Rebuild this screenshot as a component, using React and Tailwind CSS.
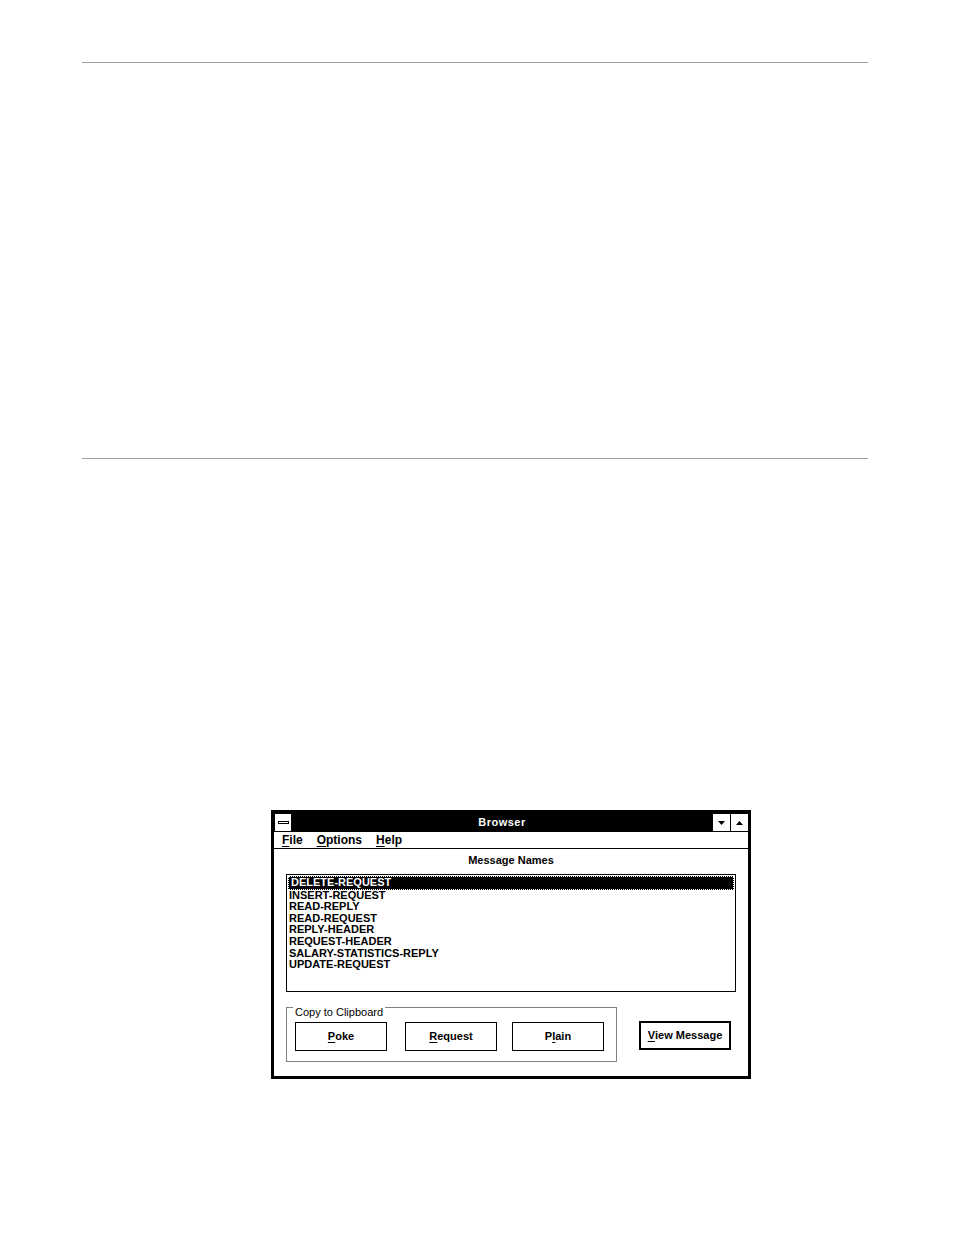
import React from 'react';

const items = [
  'DELETE-REQUEST',
  'INSERT-REQUEST',
  'READ-REPLY',
  'READ-REQUEST',
  'REPLY-HEADER',
  'REQUEST-HEADER',
  'SALARY-STATISTICS-REPLY',
  'UPDATE-REQUEST',
];

const font = { fontFamily: '"Liberation Sans", Arial, sans-serif' };

const Hot = ({ children }) => <span className="underline underline-offset-2">{children}</span>;

const Btn = ({ children, primary }) => (
  <div
    className={`flex h-[29px] w-[92px] items-center justify-center bg-white text-[11px] font-bold text-black ${
      primary ? 'border-2 border-black' : 'border border-black'
    }`}
  >
    {children}
  </div>
);

const Arrow = ({ up }) => (
  <div className="flex h-[17px] w-[17px] items-center justify-center bg-white">
    <svg width="7" height="4" viewBox="0 0 7 4">
      {up ? <polygon points="0,4 7,4 3.5,0" fill="#000" /> : <polygon points="0,0 7,0 3.5,4" fill="#000" />}
    </svg>
  </div>
);

export default function App() {
  return (
    <div className="min-h-[1235px] w-[954px] bg-white" style={font}>
      <div className="pt-[62px]">
        <div className="ml-[82px] h-px w-[786px] bg-[#a0a0a0]" />
        <div className="h-[395px]" />
        <div className="ml-[82px] h-px w-[786px] bg-[#a0a0a0]" />
        <div className="h-[351px]" />

        <div className="ml-[271px] w-[480px] border-[3px] border-black bg-white">
          {/* title bar */}
          <div className="flex h-[19px] items-center bg-black">
            <div className="ml-px flex h-[17px] w-[16px] items-center justify-center bg-white">
              <div className="h-[3px] w-[11px] border border-black bg-white" />
            </div>
            <div className="flex-1 text-center text-[11px] font-bold tracking-[0.5px] text-white">Browser</div>
            <div className="flex gap-px">
              <Arrow />
              <Arrow up />
            </div>
          </div>

          {/* menu bar */}
          <div className="flex h-[17px] items-center gap-[14px] border-b border-black pl-[8px] text-[12px] font-bold text-black">
            <span><Hot>F</Hot>ile</span>
            <span><Hot>O</Hot>ptions</span>
            <span><Hot>H</Hot>elp</span>
          </div>

          <div className="px-[12px] pb-[14px]">
            <div className="pt-[5px] text-center text-[11px] font-bold leading-[13px] text-black">Message Names</div>

            <div className="mt-[7px] h-[118px] border border-black pt-px">
              {items.map((it, i) => (
                <div
                  key={it}
                  className={`pl-[2px] text-[11px] font-bold leading-[11.6px] ${
                    i === 0 ? 'mx-px border border-dotted border-white bg-black text-white' : 'text-black'
                  }`}
                >
                  {it}
                </div>
              ))}
            </div>

            <div className="mt-[15px] flex items-start">
              <div className="relative h-[55px] w-[331px] border border-[#808080]">
                <div className="absolute -top-[3px] left-[6px] bg-white px-[2px] text-[11px] leading-[14px] text-black">
                  Copy to Clipboard
                </div>
                <div className="flex pl-[8px] pt-[14px]">
                  <Btn><Hot>P</Hot>oke</Btn>
                  <div className="w-[18px]" />
                  <Btn><Hot>R</Hot>equest</Btn>
                  <div className="w-[15px]" />
                  <Btn>P<Hot>l</Hot>ain</Btn>
                </div>
              </div>
              <div className="ml-[22px] mt-[14px]">
                <Btn primary><Hot>V</Hot>iew Message</Btn>
              </div>
            </div>
          </div>
        </div>
      </div>
    </div>
  );
}
